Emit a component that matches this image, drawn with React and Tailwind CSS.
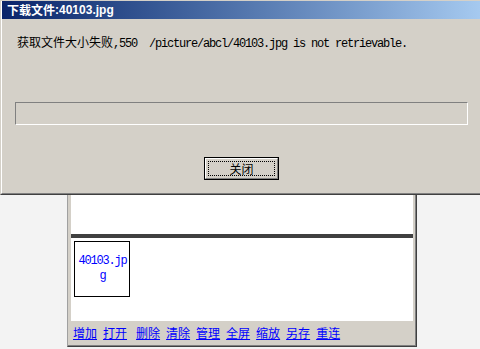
import React from "react";

const cjk = { fontFamily: '"Noto Sans CJK SC", sans-serif' };

function Mono({ children, className = "" }) {
  return (
    <span
      className={"text-[12px] tracking-[-1.2px] " + className}
      style={{ fontFamily: '"Liberation Mono", monospace' }}
    >
      {children}
    </span>
  );
}

export default function App() {
  const links = ["增加", "打开", "删除", "清除", "管理", "全屏", "缩放", "另存", "重连"];
  return (
    <div
      className="relative w-[480px] h-[349px] overflow-hidden bg-[#f3f3f3] flex flex-col justify-end pb-[2px]"
      style={cjk}
    >
      {/* underlying panel */}
      <div className="ml-[67px] w-[350px] h-[197px] flex border-l border-l-[#a0a0a0] border-r border-r-[#404040] border-b border-b-[#404040]">
        <div className="flex-1 flex flex-col bg-[#d4d0c8] pl-[3px] pr-[2px] border-r border-b border-[#808080]">
          <div className="flex-1 flex flex-col bg-white">
            <div className="flex-1" />
            <div className="h-[4px] bg-[#404040]" />
            <div className="h-[83px] pl-[3px] pt-[3px]">
              <div className="w-[56px] h-[56px] border border-black flex flex-col items-center justify-center text-[#0000ff] leading-[15px] pl-[1px]">
                <Mono>40103.jp</Mono>
                <Mono>g</Mono>
              </div>
            </div>
          </div>
          <div className="h-[24px] pl-[2px] pt-[6px] flex gap-[6px] text-[12px] leading-[12px]">
            {links.map((l, i) => (
              <a
                key={l}
                href="#"
                className={"text-[#0000ff] underline " + (i === 2 ? "ml-[3px]" : "")}
              >
                {l}
              </a>
            ))}
          </div>
        </div>
      </div>

      {/* dialog overlay */}
      <div className="absolute left-0 top-0 w-[483px] h-[195px] border-t border-l border-t-[#d4d0c8] border-l-[#d4d0c8] border-b border-r border-b-[#404040] border-r-[#404040] bg-[#d4d0c8]">
        <div className="h-full flex flex-col border-l border-l-white border-b border-r border-b-[#808080] border-r-[#808080]">
          <div className="h-[18px] flex items-center pl-[5px] text-white font-bold text-[12px] bg-gradient-to-r from-[#0a246a] to-[#a6caf0]">
            <span style={cjk}>下载文件</span>
            <span style={{ fontFamily: '"Liberation Sans", sans-serif' }}>:40103.jpg</span>
          </div>
          <div className="mt-[17px] pl-[15px] text-[12px] leading-[12px] text-black whitespace-pre flex items-baseline">
            <span style={cjk}>获取文件大小失败</span>
            <Mono>{",550  /picture/abcl/40103.jpg is not retrievable."}</Mono>
          </div>
          <div className="mt-[52px] self-center w-[453px] h-[23px] border-t border-l border-t-[#808080] border-l-[#808080] border-b border-r border-b-white border-r-white" />
          <div className="mt-[32px] self-center w-[75px] h-[23px] border border-black bg-[#d4d0c8]">
            <div className="w-full h-full border-t border-l border-t-white border-l-white border-b border-r border-b-[#808080] border-r-[#808080] p-[2px]">
              <div className="w-full h-full border border-dotted border-black flex items-center justify-center text-[12px] leading-[12px] text-black">
                关闭
              </div>
            </div>
          </div>
        </div>
      </div>
    </div>
  );
}
